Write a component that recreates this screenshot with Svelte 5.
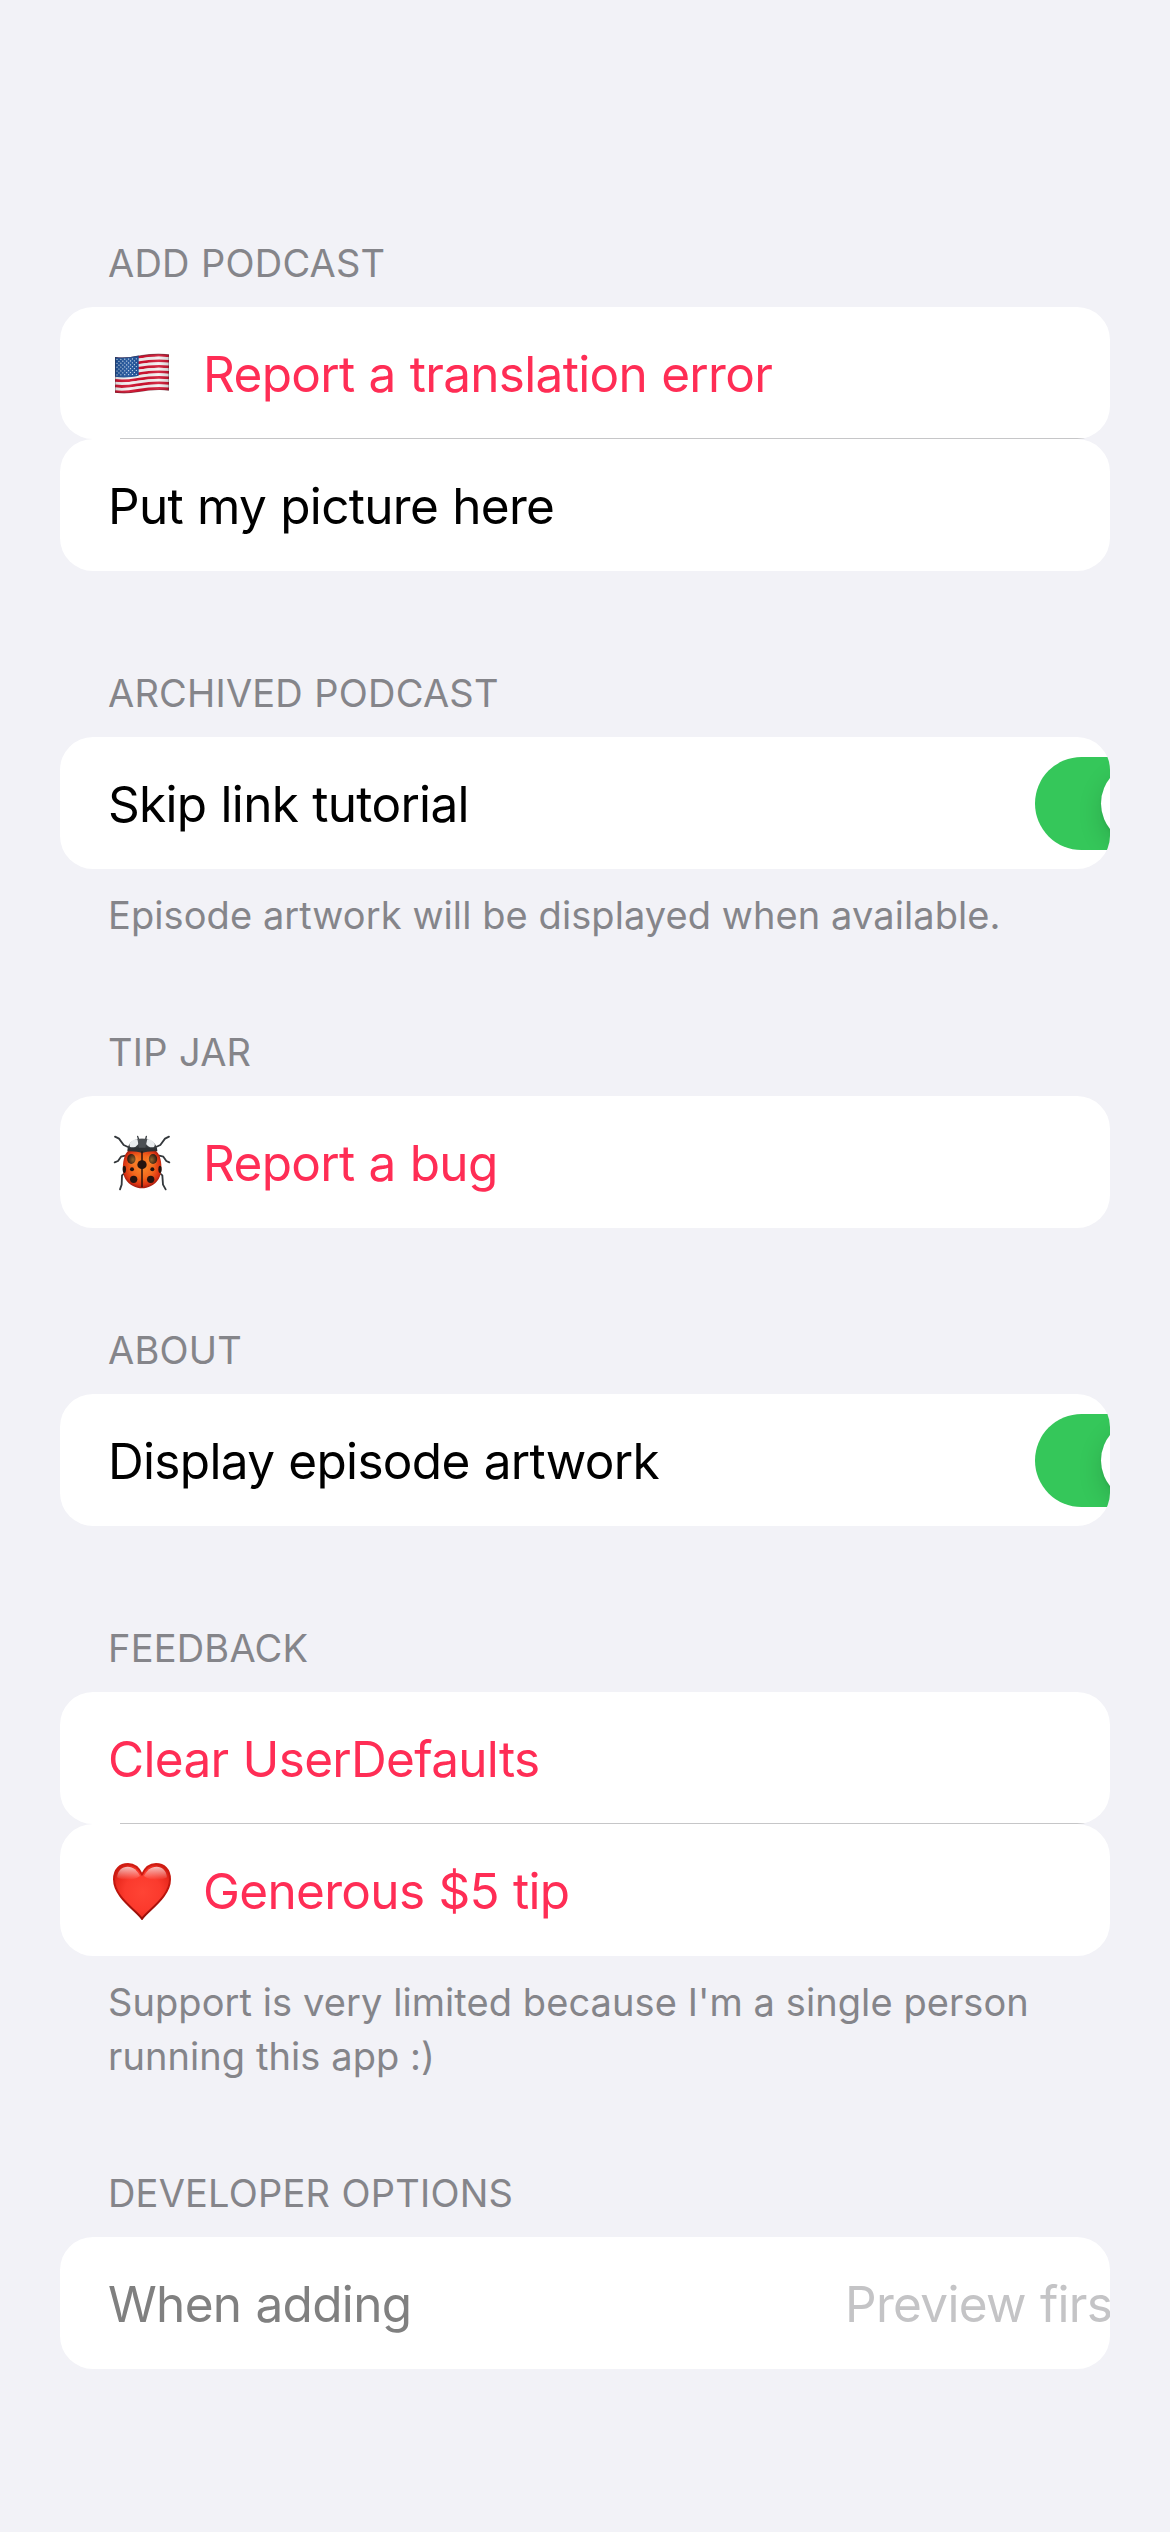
<script>
  const sections = [
    {
      title: 'ADD PODCAST',
      rows: [
        { label: 'Report a translation error', icon: 'flag', accent: true },
        { label: 'Put my picture here' },
      ],
    },
    {
      title: 'ARCHIVED PODCAST',
      rows: [{ label: 'Skip link tutorial', toggle: true }],
      footer: 'Episode artwork will be displayed when available.',
    },
    {
      title: 'TIP JAR',
      rows: [{ label: 'Report a bug', icon: 'bug', accent: true }],
    },
    {
      title: 'ABOUT',
      rows: [{ label: 'Display episode artwork', toggle: true }],
    },
    {
      title: 'FEEDBACK',
      rows: [
        { label: 'Clear UserDefaults', accent: true },
        { label: 'Generous $5 tip', icon: 'heart', accent: true },
      ],
      footer: "Support is very limited because I'm a single person running this app :)",
    },
    {
      title: 'DEVELOPER OPTIONS',
      rows: [{ label: 'When adding', value: 'Preview first', disabled: true }],
    },
  ];

  const stripes = Array.from({ length: 13 }, (_, i) => ({
    y: 51 + (i + 0.5) * 8.3,
    color: i % 2 ? '#f4f1f2' : '#d0122f',
  }));

  const stars = [];
  for (let r = 0; r < 9; r++) {
    for (let c = 0; c < (r % 2 ? 5 : 6); c++) {
      stars.push({ x: 51 + c * 11.6 + (r % 2 ? 5.8 : 0), y: 58.5 + r * 5.8 });
    }
  }
</script>

<main>
  {#each sections as section}
    <section class:noted={section.footer}>
      <h2>{section.title}</h2>
      <div class="group">
        {#each section.rows as row}
          <div class="row" class:accent={row.accent} class:disabled={row.disabled}>
            {#if row.icon === 'flag'}
              <svg class="icon" viewBox="24 -21 210 240">
                <defs>
                  <clipPath id="flagShape">
                    <path d="M45 51C98 60 130 33 207 43V152C142 144 104 167 45 158Z" />
                  </clipPath>
                  <linearGradient id="flagShade" x1="0" x2="1" y1="0" y2="0">
                    <stop offset="0" stop-color="#000" stop-opacity=".12" />
                    <stop offset=".25" stop-color="#fff" stop-opacity=".08" />
                    <stop offset=".5" stop-color="#000" stop-opacity=".04" />
                    <stop offset=".8" stop-color="#fff" stop-opacity=".12" />
                    <stop offset="1" stop-color="#000" stop-opacity=".15" />
                  </linearGradient>
                </defs>
                <g clip-path="url(#flagShape)">
                  {#each stripes as s}
                    <path
                      d="M45 {s.y}C98 {s.y + 9} 130 {s.y - 17} 207 {s.y - 7.5}"
                      fill="none"
                      stroke={s.color}
                      stroke-width="8.7"
                    />
                  {/each}
                  <path d="M45 48V110C70 114 95 112 116 107V45Z" fill="#1d5199" />
                  {#each stars as s}
                    <circle cx={s.x} cy={s.y - (s.x - 45) * 0.03} r="1.9" fill="#d5e3f2" />
                  {/each}
                  <path d="M45 40H207V165H45Z" fill="url(#flagShade)" />
                  <path
                    d="M45 51C98 60 130 33 207 43V152C142 144 104 167 45 158Z"
                    fill="none"
                    stroke="#3a2a30"
                    stroke-opacity=".45"
                    stroke-width="4"
                  />
                </g>
              </svg>
            {:else if row.icon === 'bug'}
              <svg class="icon" viewBox="24 6 210 240">
                <defs>
                  <radialGradient id="shell" cx=".5" cy=".45" r=".58">
                    <stop offset="0" stop-color="#f98a2a" />
                    <stop offset=".5" stop-color="#f2661c" />
                    <stop offset=".8" stop-color="#dc3413" />
                    <stop offset="1" stop-color="#8c100c" />
                  </radialGradient>
                  <linearGradient id="head" x1="0" x2="0" y1="0" y2="1">
                    <stop offset="0" stop-color="#5c6064" />
                    <stop offset="1" stop-color="#232629" />
                  </linearGradient>
                  <radialGradient id="sheen">
                    <stop offset="0" stop-color="#ffb648" stop-opacity=".5" />
                    <stop offset="1" stop-color="#ffb648" stop-opacity="0" />
                  </radialGradient>
                </defs>
                <g fill="none" stroke="#34383c" stroke-width="5.5" stroke-linecap="round" stroke-linejoin="round">
                  <path d="M84 81L71 75L57 56L45 50" />
                  <path d="M168 81L181 75L195 56L207 50" />
                  <path d="M76 107L63 110L54 123L44 127" />
                  <path d="M178 107L190 110L199 123L208 127" />
                  <path d="M72 161L66 166L65 194L60 208" />
                  <path d="M181 161L187 166L189 194L197 208" />
                  <path d="M117 62L113 49" stroke-width="4" />
                  <path d="M136 62L139 49" stroke-width="4" />
                </g>
                <path d="M82 94C82 70 98 56 126 56S172 70 172 94Z" fill="url(#head)" />
                <ellipse cx="103" cy="70" rx="16" ry="10" transform="rotate(-32 103 70)" fill="#e9ecee" />
                <ellipse cx="150" cy="70" rx="16" ry="10" transform="rotate(32 150 70)" fill="#e9ecee" />
                <path d="M112 56H142L136 84H117Z" fill="#4b4f53" />
                <path d="M126 92C153 82 170 88 179 109C186 130 187 158 176 177C164 196 143 205 126 205S88 196 76 177C66 158 67 130 74 109C82 88 100 82 126 92Z" fill="url(#shell)" />
                <path d="M84 94C94 80 158 80 169 94C150 93 138 96 126 99C115 96 103 93 84 94Z" fill="#2d3033" />
                <path d="M126 94V202" stroke="#2c100b" stroke-width="4.5" />
                <g fill="#25130f">
                  <ellipse cx="94" cy="117" rx="12.5" ry="15" />
                  <ellipse cx="159" cy="117" rx="12.5" ry="15" />
                  <ellipse cx="126" cy="134" rx="14" ry="13" />
                  <circle cx="96" cy="148" r="6" />
                  <circle cx="157" cy="148" r="6" />
                  <ellipse cx="73" cy="148" rx="5" ry="11" />
                  <ellipse cx="180" cy="148" rx="5" ry="11" />
                  <ellipse cx="101" cy="178" rx="11" ry="11" />
                  <ellipse cx="152" cy="178" rx="11" ry="11" />
                </g>
                <ellipse cx="99" cy="119" rx="18" ry="21" fill="url(#sheen)" />
                <ellipse cx="155" cy="119" rx="18" ry="21" fill="url(#sheen)" />
              </svg>
            {:else if row.icon === 'heart'}
              <svg class="icon" viewBox="24 0 210 240">
                <defs>
                  <radialGradient id="heartFill" gradientUnits="userSpaceOnUse" cx="128" cy="126" r="98">
                    <stop offset="0" stop-color="#ff4435" />
                    <stop offset=".55" stop-color="#fb3a2d" />
                    <stop offset=".85" stop-color="#ea2a1e" />
                    <stop offset="1" stop-color="#d01c12" />
                  </radialGradient>
                  <linearGradient id="heartEdge" x1="0" x2="0" y1="0" y2="1">
                    <stop offset="0" stop-color="#cf1c12" />
                    <stop offset=".5" stop-color="#bd150d" />
                    <stop offset="1" stop-color="#94100a" />
                  </linearGradient>
                  <linearGradient id="heartGloss" x1="0" x2="0" y1="0" y2="1">
                    <stop offset="0" stop-color="#fff" stop-opacity=".72" />
                    <stop offset="1" stop-color="#fff" stop-opacity="0" />
                  </linearGradient>
                </defs>
                <path
                  d="M126 207C110 182 42 142 42 88C42 58 60 42 84 42C104 42 117 53 126 74C135 53 148 42 168 42C192 42 210 58 210 88C210 142 142 182 126 207Z"
                  fill="url(#heartFill)"
                  stroke="url(#heartEdge)"
                  stroke-width="6"
                  stroke-linejoin="round"
                />
                <path d="M51 82C53 61 66 50 83 50C100 50 112 61 120 78C108 91 64 93 51 82Z" fill="url(#heartGloss)" />
                <path d="M201 82C199 61 186 50 170 50C152 50 140 61 132 78C144 91 188 93 201 82Z" fill="url(#heartGloss)" />
              </svg>
            {/if}
            <span class="label" class:before-toggle={row.toggle} class:before-value={row.value}>{row.label}</span>
            {#if row.toggle}
              <span class="toggle"><span class="knob"></span></span>
            {/if}
            {#if row.value}
              <span class="value">{row.value}</span>
            {/if}
          </div>
        {/each}
      </div>
      {#if section.footer}
        <p>{section.footer}</p>
      {/if}
    </section>
  {/each}
</main>

<style>
  :global(body) {
    background: #f2f2f7;
  }

  main {
    box-sizing: border-box;
    width: 1170px;
    height: 2532px;
    padding: 236px 60px 0;
    overflow: hidden;
    background: #f2f2f7;
    font-family: Inter, 'Liberation Sans', sans-serif;
    color: #000;
  }

  section {
    padding-bottom: 95px;
  }

  section.noted {
    padding-bottom: 83px;
  }

  h2 {
    margin: 0;
    height: 71px;
    padding-left: 48px;
    font-size: 38px;
    font-weight: 400;
    line-height: 54px;
    letter-spacing: 0.2px;
    word-spacing: 0.5px;
    color: #85858a;
  }

  .row {
    position: relative;
    display: flex;
    align-items: center;
    box-sizing: border-box;
    height: 132px;
    padding-left: 48px;
    overflow: hidden;
    border-radius: 33px;
    background: #fff;
    font-size: 49.5px;
    line-height: 66px;
    letter-spacing: -0.68px;
    word-spacing: 0.8px;
    white-space: nowrap;
  }

  .row:not(:last-child)::after {
    content: '';
    position: absolute;
    left: 60px;
    right: 0;
    bottom: 0;
    height: 1px;
    background: #c6c6c8;
  }

  .accent {
    color: #ff2d55;
  }

  .disabled {
    color: #808080;
  }

  .icon {
    flex: none;
    width: 70px;
    height: 80px;
    margin-right: 25px;
  }

  .label,
  .value {
    flex: none;
    padding-top: 2px;
  }

  .before-toggle {
    width: 927px;
  }

  .before-value {
    width: 737px;
  }

  .value {
    color: #c4c4c6;
  }

  .toggle {
    display: flex;
    flex: none;
    align-items: center;
    justify-content: flex-end;
    box-sizing: border-box;
    width: 153px;
    height: 93px;
    padding: 6px;
    overflow: hidden;
    border-radius: 47px;
    background: #35c75a;
  }

  .knob {
    width: 81px;
    height: 81px;
    border-radius: 50%;
    background: #fff;
    box-shadow: 0 9px 24px rgba(0, 0, 0, 0.15), 0 3px 3px rgba(0, 0, 0, 0.06);
  }

  p {
    margin: 0;
    padding: 19px 48px 0;
    font-size: 38px;
    line-height: 54px;
    letter-spacing: 0.08px;
    color: #85858a;
  }
</style>
